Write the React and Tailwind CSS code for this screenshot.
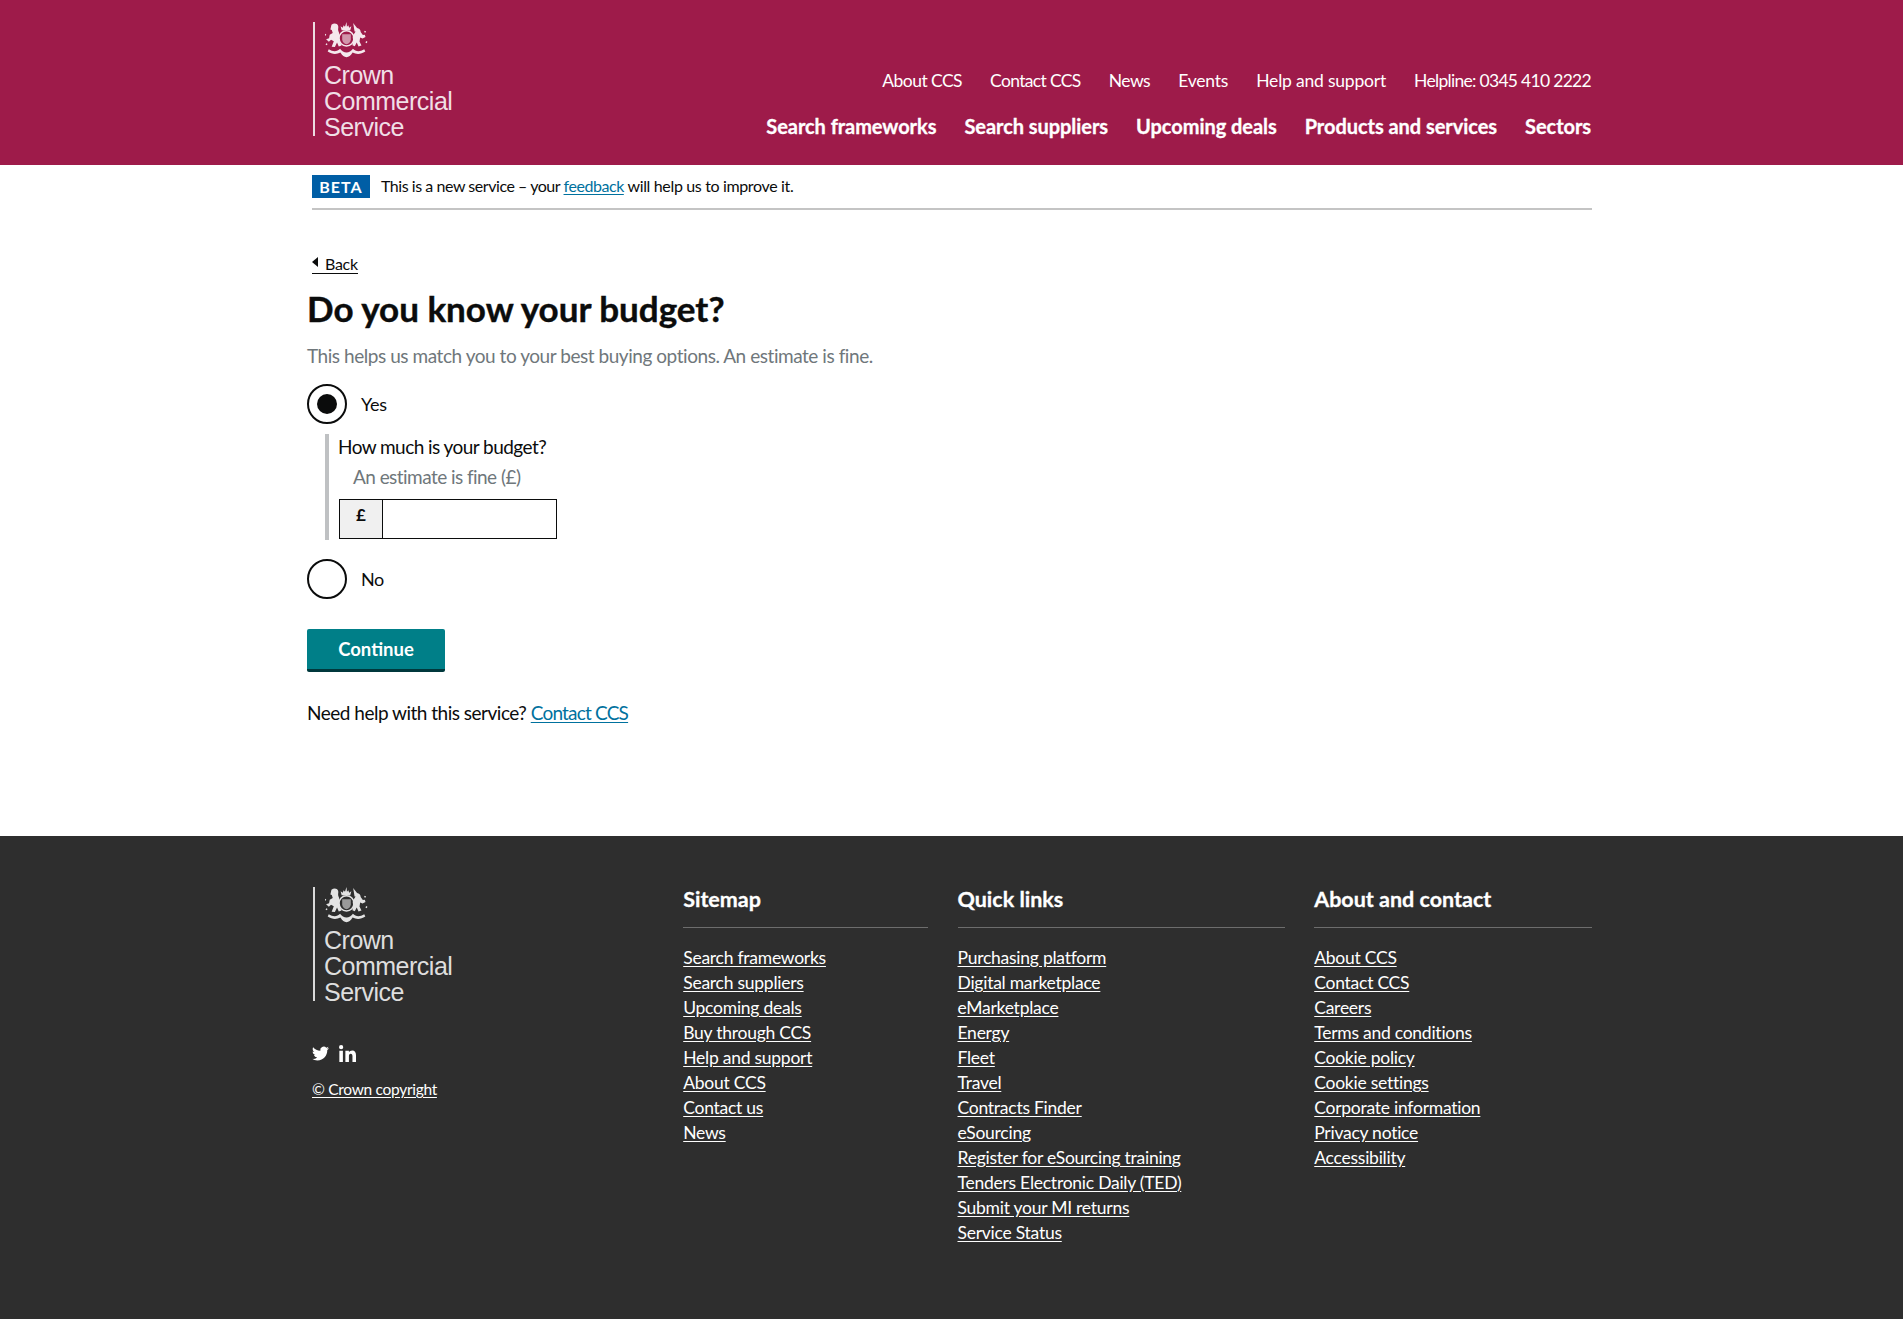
import React from "react";

const font = { fontFamily: '"Lato", "Noto Sans", sans-serif' };

// royal arms, roughly traced from the logo
function Crest({ className }) {
  return (
    <svg viewBox="0 0 40 33" preserveAspectRatio="none" className={className} fill="currentColor">
      {/* crown */}
      <path d="M15.500 7.500l-1-3.500 2 1.200.8-2.200 1.300 1.300L20 0l.4 4.300 1.300-1.300.8 2.200 2-1.200-1 3.500z" />
      {/* garter + shield */}
      <circle cx="20" cy="15" r="7" fill="none" stroke="currentColor" strokeWidth="1.500" />
      <path d="M16 11.200h8v4.800c0 2.600-2.200 3.800-4 4.500-1.800-.7-4-1.900-4-4.500z" opacity=".6" />
      {/* lion */}
      <path d="M6 2.500C8.200.6 11.400 1 12.200 3.400c.6 1.800-.4 3 .2 4.800.5 1.400 1.200 2.200.8 4.200-.4 1.800 0 4 .6 6l1.600 3.200-2.600.8-1.600-3.600-2 4.200-3-.4 2-5-2.600-1.400-2 1.900L1 15.900l2.800-.9.600-3.200 2.800-1.700-.9-2.700-1.300-.6z" />
      {/* unicorn */}
      <path d="M27.500 8.800L26.200 1l3.600 4.600c1.900.3 3.400 1.700 3.400 3.600l2 2.800 1.800-.4.700 2.200-2.800 1.300-2.200-.9-.6 3.600 1.800 3.800-2.700.8-1.700-3.700-1.800 3.500-2.200-1c.8-2.300 1-4.300.4-6.200-.5-1.900.4-3 2.600-6.200z" />
      <path d="M0 10.800l1.200.7-.7 1.200-1.200-.7zM38.300 17.500l1.200.7-.7 1.200-1.200-.7zM1.200 19.500l1.200.7-.7 1.200-1.200-.7zM37 8l1.200.7-.7 1.200-1.200-.7z" />
      {/* motto ribbon */}
      <path d="M3.500 25c4 2.500 8 2.200 10.500-.4 1.500 2 3.800 3.400 6 3.400s4.500-1.400 6-3.400c2.500 2.600 6.500 2.900 10.500.4l1 2c-4 2.800-8.300 2.800-11.800 1-1.700 2.800-3.600 4.200-5.700 4.200s-4-1.400-5.700-4.200c-3.500 1.800-7.800 1.800-11.800-1z" />
    </svg>
  );
}

function Logo({ barClass, textClass, crestClass }) {
  return (
    <div className="flex h-[114px] w-[140px] ml-[1px]">
      <div className={`w-[2px] h-full ${barClass}`} />
      <div className="ml-[9px] flex flex-col">
        <Crest className={`w-[43px] h-[36px] ml-[1px] shrink-0 ${crestClass}`} />
        <div
          className={`mt-[4px] text-[25px] leading-[26px] tracking-[-0.5px] shrink-0 ${textClass}`}
          style={{ fontFamily: '"Liberation Sans", sans-serif' }}
        >
          <div>Crown</div>
          <div>Commercial</div>
          <div>Service</div>
        </div>
      </div>
    </div>
  );
}

function FooterColumn({ title, links, className }) {
  return (
    <div className={`-mt-[1px] ${className}`}>
      <h3 className="text-[21.5px] leading-[26px] font-bold text-white pb-[15px] border-b border-[#6d6d6d] [-webkit-text-stroke:0.3px]">
        {title}
      </h3>
      <ul className="mt-[17px]">
        {links.map((l) => (
          <li key={l} className="h-[25px] text-[17.5px] leading-[25px] tracking-[-0.25px] text-white underline underline-offset-2">
            {l}
          </li>
        ))}
      </ul>
    </div>
  );
}

export default function App() {
  const mainLinks = ["Search frameworks", "Search suppliers", "Upcoming deals", "Products and services", "Sectors"];

  return (
    <div className="min-h-[1319px] bg-white text-[#0b0c0c] flex flex-col" style={font}>
      <header className="bg-[#9e1b4a] h-[165px]">
        <div className="w-[1279px] ml-[312px] pt-[22px] flex justify-between">
          <Logo barClass="bg-[#ecdbe1]" textClass="text-[#f0dfe6]" crestClass="text-[#f5e8ed]" />
          <nav className="flex flex-col items-end pt-[47px] text-white">
            <div className="flex gap-[28px] text-[17.5px] leading-[24px]">
              <span className="tracking-[-0.55px]">About CCS</span>
              <span className="tracking-[-0.65px]">Contact CCS</span>
              <span className="tracking-[-0.5px]">News</span>
              <span className="tracking-[-0.2px]">Events</span>
              <span className="tracking-[-0.2px]">Help and support</span>
              <span className="tracking-[-0.7px]">Helpline: 0345 410 2222</span>
            </div>
            <div className="flex gap-[28px] mt-[20px] text-[20px] leading-[26px] font-bold tracking-[-0.05px] [-webkit-text-stroke:0.3px]">
              {mainLinks.map((l) => (
                <span key={l}>{l}</span>
              ))}
            </div>
          </nav>
        </div>
      </header>

      <main className="flex-1 w-[1285px] ml-[307px]">
        <div className="ml-[5px] h-[45px] border-b-2 border-[#c4c4c4] flex items-start pt-[10px]">
          <span className="bg-[#005ea5] text-white font-bold text-[16px] leading-[23px] h-[23px] w-[58px] text-center tracking-[1px]">
            BETA
          </span>
          <p className="ml-[11px] text-[16px] leading-[22px] tracking-[-0.45px]">
            This is a new service – your{" "}
            <a className="text-[#00719e] underline underline-offset-2">feedback</a>{" "}
            <span className="tracking-[-0.35px]">will help us to improve it.</span>
          </p>
        </div>

        <a className="ml-[5px] mt-[44px] inline-flex items-center h-[20px] w-[46px] border-b border-[#0b0c0c] text-[16px] leading-[20px] tracking-[-0.3px]">
          <span className="w-0 h-0 border-y-[5px] border-y-transparent border-r-[6px] border-r-[#0b0c0c] -mt-[3px] mr-[7px]" />
          Back
        </a>

        <h1 className="mt-[12px] text-[35px] leading-[44px] font-bold [-webkit-text-stroke:0.4px]">Do you know your budget?</h1>
        <p className="mt-[12px] text-[19px] leading-[27px] tracking-[-0.45px] text-[#6f777b]">
          This helps us match you to your best buying options. An estimate is fine.
        </p>

        <div className="mt-[15px] flex items-center h-[40px]">
          <span className="w-[40px] h-[40px] rounded-full border-2 border-[#0b0c0c] flex items-center justify-center">
            <span className="w-[20px] h-[20px] rounded-full bg-[#0b0c0c]" />
          </span>
          <span className="ml-[14px] text-[18px] tracking-[-0.2px]">Yes</span>
        </div>

        <div className="mt-[10px] ml-[18px] w-[300px] border-l-4 border-[#bfc1c3] pl-[9px] h-[106px]">
          <p className="text-[19px] leading-[26px] tracking-[-0.55px]">How much is your budget?</p>
          <p className="mt-[4px] ml-[15px] text-[19px] leading-[26px] tracking-[-0.55px] text-[#6f777b]">An estimate is fine (£)</p>
          <div className="mt-[9px] ml-[1px] flex w-[218px] h-[40px] border border-[#0b0c0c]">
            <span className="w-[43px] border-r border-[#0b0c0c] bg-[#f0f0f0] text-center font-bold text-[17px] leading-[30px]">£</span>
          </div>
        </div>

        <div className="mt-[19px] flex items-center h-[40px]">
          <span className="w-[40px] h-[40px] rounded-full border-2 border-[#0b0c0c]" />
          <span className="ml-[14px] text-[18px] tracking-[-0.5px]">No</span>
        </div>

        <button className="mt-[30px] block w-[138px] h-[43px] bg-[#007f88] border-b-[3px] border-[#00383c] rounded-[2px] text-white font-bold text-[18.5px] leading-[40px]">
          Continue
        </button>

        <p className="mt-[27px] text-[19px] leading-[27px] tracking-[-0.5px]">
          Need help with this service?{" "}
          <a className="text-[#00719e] underline underline-offset-2 tracking-[-0.8px]">Contact CCS</a>
        </p>
      </main>

      <footer className="bg-[#2e2e2e] h-[483px] shrink-0">
        <div className="w-[1280px] ml-[312px] pt-[51px] flex">
          <div className="w-[371.5px]">
            <Logo barClass="bg-[#d9d9d9]" textClass="text-[#dedede]" crestClass="text-[#e3e3e3]" />
            <div className="mt-[44px] flex items-center gap-[10px] text-white">
              <svg viewBox="0 0 24 24" className="w-[17px] h-[17px]" fill="currentColor">
                <path d="M23.950 4.570a10 10 0 0 1-2.820.770 4.960 4.960 0 0 0 2.160-2.720c-.950.550-2 .960-3.130 1.190a4.920 4.920 0 0 0-8.380 4.480C7.690 8.100 4.070 6.130 1.640 3.160a4.820 4.820 0 0 0-.660 2.470c0 1.710.870 3.210 2.190 4.100a4.900 4.900 0 0 1-2.230-.620v.060a4.920 4.920 0 0 0 3.950 4.830 5 5 0 0 1-2.210.080 4.940 4.940 0 0 0 4.600 3.420A9.870 9.870 0 0 1 0 19.540a14 14 0 0 0 7.560 2.210c9.050 0 14-7.500 14-13.980 0-.210 0-.420-.020-.630a9.940 9.940 0 0 0 2.460-2.550z" />
              </svg>
              <svg viewBox="0 0 24 24" className="w-[17px] h-[17px]" fill="currentColor">
                <path d="M5.500 24H.5V8h5zM3 6a3 3 0 1 1 0-6 3 3 0 0 1 0 6zm21 18h-5v-8c0-2-.7-3.500-2.500-3.500S14 14 14 16v8H9V8h5v2.200C15 8.800 16.500 7.700 18.800 7.700 22 7.700 24 10 24 14.500z" />
              </svg>
            </div>
            <p className="mt-[16px] text-[15.5px] leading-[22px] tracking-[-0.3px] text-white underline underline-offset-2">© Crown copyright</p>
          </div>
          <FooterColumn
            title="Sitemap"
            className="w-[245px]"
            links={["Search frameworks", "Search suppliers", "Upcoming deals", "Buy through CCS", "Help and support", "About CCS", "Contact us", "News"]}
          />
          <FooterColumn
            title="Quick links"
            className="w-[328px] ml-[29.5px]"
            links={["Purchasing platform", "Digital marketplace", "eMarketplace", "Energy", "Fleet", "Travel", "Contracts Finder", "eSourcing", "Register for eSourcing training", "Tenders Electronic Daily (TED)", "Submit your MI returns", "Service Status"]}
          />
          <FooterColumn
            title="About and contact"
            className="w-[278px] ml-[29px]"
            links={["About CCS", "Contact CCS", "Careers", "Terms and conditions", "Cookie policy", "Cookie settings", "Corporate information", "Privacy notice", "Accessibility"]}
          />
        </div>
      </footer>
    </div>
  );
}
